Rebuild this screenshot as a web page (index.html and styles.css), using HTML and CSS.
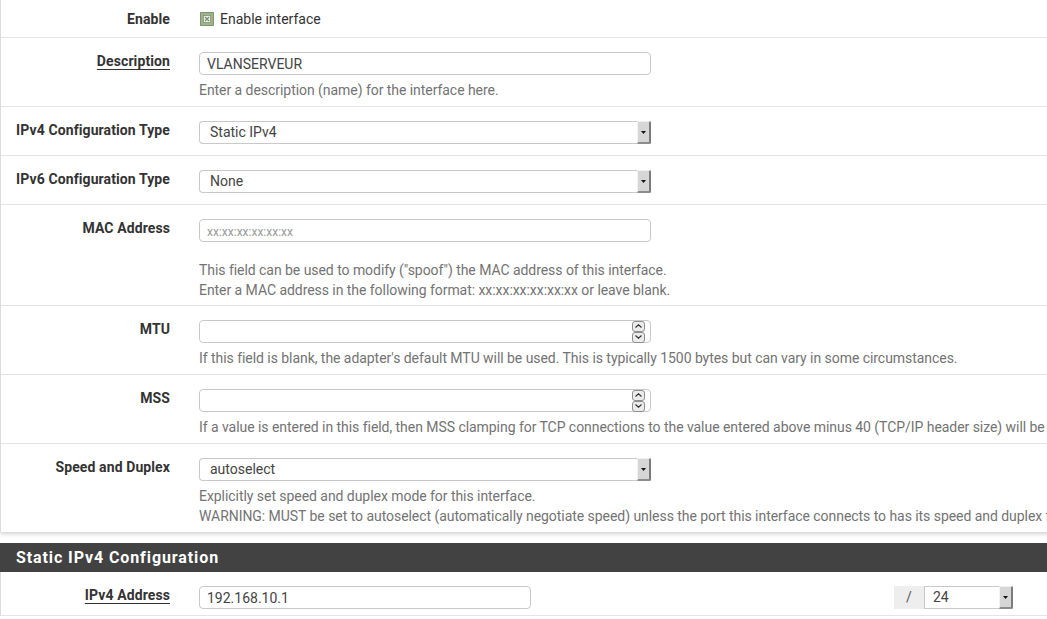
FILE: index.html
```html
<!DOCTYPE html>
<html lang="en">
<head>
<meta charset="utf-8">
<title>Interface configuration</title>
<link rel="stylesheet" href="styles.css">
</head>
<body>
<div class="page">
  <section class="panel">
    <div class="row row-first">
      <div class="label">Enable</div>
      <div class="field">
        <label class="check">
          <svg width="14" height="14" viewBox="0 0 14 14" aria-hidden="true">
            <rect x="0.5" y="0.5" width="13" height="13" fill="#9db485" stroke="#3a4733" stroke-dasharray="1 1"/>
            <rect x="3.5" y="3.5" width="7" height="7" fill="#eef3e8" stroke="#6f7f62" stroke-width="0.6"/>
            <path d="M5 5l4 4M9 5l-4 4" stroke="#7e8b73" stroke-width="1.3"/>
          </svg>
          <span>Enable interface</span>
        </label>
      </div>
    </div>

    <div class="row">
      <div class="label"><span class="u">Description</span></div>
      <div class="field">
        <input class="input" type="text" value="VLANSERVEUR">
        <div class="help">Enter a description (name) for the interface here.</div>
      </div>
    </div>

    <div class="row">
      <div class="label">IPv4 Configuration Type</div>
      <div class="field">
        <div class="select"><span class="select-text">Static IPv4</span><span class="select-arrow"><svg width="5" height="3" viewBox="0 0 5 3"><path d="M0 0h5L2.5 3z" fill="#111"/></svg></span></div>
      </div>
    </div>

    <div class="row">
      <div class="label">IPv6 Configuration Type</div>
      <div class="field">
        <div class="select"><span class="select-text">None</span><span class="select-arrow"><svg width="5" height="3" viewBox="0 0 5 3"><path d="M0 0h5L2.5 3z" fill="#111"/></svg></span></div>
      </div>
    </div>

    <div class="row">
      <div class="label">MAC Address</div>
      <div class="field">
        <input class="input input-mac" type="text" placeholder="xx:xx:xx:xx:xx:xx">
        <div class="help help-spaced">This field can be used to modify ("spoof") the MAC address of this interface.<br>Enter a MAC address in the following format: xx:xx:xx:xx:xx:xx or leave blank.</div>
      </div>
    </div>

    <div class="row">
      <div class="label">MTU</div>
      <div class="field">
        <div class="spin-input">
          <input class="spin-field" type="text">
          <span class="spin">
            <span class="spin-btn"><svg width="7" height="4" viewBox="0 0 7 4"><path d="M0.5 3.5L3.5 0.8 6.5 3.5" fill="none" stroke="#333" stroke-width="1.2"/></svg></span>
            <span class="spin-btn"><svg width="7" height="4" viewBox="0 0 7 4"><path d="M0.5 0.5L3.5 3.2 6.5 0.5" fill="none" stroke="#333" stroke-width="1.2"/></svg></span>
          </span>
        </div>
        <div class="help">If this field is blank, the adapter's default MTU will be used. This is typically 1500 bytes but can vary in some circumstances.</div>
      </div>
    </div>

    <div class="row">
      <div class="label">MSS</div>
      <div class="field">
        <div class="spin-input">
          <input class="spin-field" type="text">
          <span class="spin">
            <span class="spin-btn"><svg width="7" height="4" viewBox="0 0 7 4"><path d="M0.5 3.5L3.5 0.8 6.5 3.5" fill="none" stroke="#333" stroke-width="1.2"/></svg></span>
            <span class="spin-btn"><svg width="7" height="4" viewBox="0 0 7 4"><path d="M0.5 0.5L3.5 3.2 6.5 0.5" fill="none" stroke="#333" stroke-width="1.2"/></svg></span>
          </span>
        </div>
        <div class="help">If a value is entered in this field, then MSS clamping for TCP connections to the value entered above minus 40 (TCP/IP header size) will be in effect.</div>
      </div>
    </div>

    <div class="row">
      <div class="label">Speed and Duplex</div>
      <div class="field">
        <div class="select"><span class="select-text">autoselect</span><span class="select-arrow"><svg width="5" height="3" viewBox="0 0 5 3"><path d="M0 0h5L2.5 3z" fill="#111"/></svg></span></div>
        <div class="help">Explicitly set speed and duplex mode for this interface.<br>WARNING: MUST be set to autoselect (automatically negotiate speed) unless the port this interface connects to has its speed and duplex forced.</div>
      </div>
    </div>
  </section>

  <section class="panel panel-second">
    <h2 class="panel-heading">Static IPv4 Configuration</h2>
    <div class="row row-last">
      <div class="label"><span class="u">IPv4 Address</span></div>
      <div class="field field-inline">
        <input class="input input-ip" type="text" value="192.168.10.1">
        <div class="subnet">
          <span class="addon">/</span>
          <div class="select select-small"><span class="select-text">24</span><span class="select-arrow"><svg width="5" height="3" viewBox="0 0 5 3"><path d="M0 0h5L2.5 3z" fill="#111"/></svg></span></div>
        </div>
      </div>
    </div>
  </section>
</div>
</body>
</html>
```

FILE: styles.css
```css
html, body {
  margin: 0;
  padding: 0;
  background: #fff;
  overflow: hidden;
}

body {
  font-family: Roboto, "Liberation Sans", sans-serif;
  font-size: 14px;
  color: #333;
}

.page {
  width: 1400px;
}

.panel {
  background: #fff;
  border-left: 1px solid #dcdcdc;
  box-shadow: 0 2px 4px rgba(0, 0, 0, 0.18);
}

.panel-second {
  margin-top: 11px;
  box-shadow: none;
}

.panel-heading {
  margin: 0 0 0 -1px;
  height: 29px;
  line-height: 29px;
  background: #424242;
  color: #fff;
  font-size: 16px;
  font-weight: 700;
  letter-spacing: 0.9px;
  padding-left: 16px;
}

.row {
  display: grid;
  grid-template-columns: 183px 1fr;
  padding: 14px 0 11px;
  border-bottom: 1px solid #e4e4e4;
}

.row:last-child {
  border-bottom: none;
  padding-bottom: 11px;
}

.row-first {
  padding: 10px 0 9px;
}

.row-last.row-last {
  padding-bottom: 6px;
  border-bottom: 1px solid #e4e4e4;
}

.label {
  text-align: right;
  padding-right: 14px;
  font-weight: 700;
  line-height: 18px;
  color: #333;
  white-space: nowrap;
  letter-spacing: 0.1px;
}

.u {
  text-decoration: underline;
  text-underline-offset: 3px;
  text-decoration-thickness: 1px;
}

.field {
  padding-left: 15px;
  min-width: 0;
}

.check {
  display: flex;
  align-items: center;
  gap: 6px;
  height: 18px;
  padding-left: 1px;
  color: #333;
}

.check svg {
  display: block;
}

.input {
  display: block;
  box-sizing: border-box;
  width: 452px;
  height: 23px;
  margin: 0;
  border: 1px solid #c9c9c9;
  border-radius: 4px;
  padding: 0 7px;
  font-family: inherit;
  font-size: 14px;
  color: #444;
  background: #fff;
  outline: none;
}

.input-mac::placeholder {
  color: #9a9a9a;
  font-size: 12px;
}

.input-ip {
  width: 332px;
}

.help {
  margin: 5px 0 -5px;
  line-height: 20px;
  color: #737373;
  white-space: nowrap;
  letter-spacing: -0.05px;
}

.help-spaced {
  margin-top: 18px;
  margin-bottom: -6px;
}

.select {
  display: flex;
  box-sizing: border-box;
  width: 452px;
  height: 23px;
  border: 1px solid #c9c9c9;
  border-right: none;
  border-radius: 4px 0 0 4px;
  background: #fff;
}

.select-text {
  flex: 1;
  padding-left: 10px;
  line-height: 21px;
  color: #444;
}

.select-arrow {
  display: flex;
  align-items: center;
  justify-content: center;
  box-sizing: border-box;
  width: 14px;
  height: 23px;
  margin-top: -1px;
  background: #d6d6d6;
  border-left: 1px solid #f2f2f2;
  border-top: 1px solid #efefef;
  border-right: 2px solid #7b7b7b;
  border-bottom: 2px solid #8c8c8c;
  border-radius: 0 2px 2px 0;
}

.select-arrow svg {
  display: block;
}

.spin-input {
  display: flex;
  align-items: center;
  box-sizing: border-box;
  width: 452px;
  height: 23px;
  border: 1px solid #c9c9c9;
  border-radius: 4px;
  background: #fff;
  padding-right: 5px;
}

.spin-field {
  flex: 1;
  min-width: 0;
  border: none;
  outline: none;
  height: 21px;
  padding: 0 7px;
  font-family: inherit;
  font-size: 14px;
  background: transparent;
}

.spin {
  display: flex;
  flex-direction: column;
}

.spin-btn {
  display: flex;
  align-items: center;
  justify-content: center;
  box-sizing: border-box;
  width: 13px;
  height: 11px;
  background: #ececec;
  border: 1px solid #8f8f8f;
  border-radius: 3px;
}

.spin-btn svg {
  display: block;
}

.field-inline {
  display: flex;
  align-items: center;
}

.subnet {
  display: flex;
  margin-left: 363px;
}

.addon {
  box-sizing: border-box;
  width: 30px;
  height: 23px;
  line-height: 23px;
  text-align: center;
  background: #eeeeee;
  color: #555;
}

.select-small {
  width: 89px;
  border-radius: 0;
}

.select-small .select-text {
  padding-left: 8px;
}
```
